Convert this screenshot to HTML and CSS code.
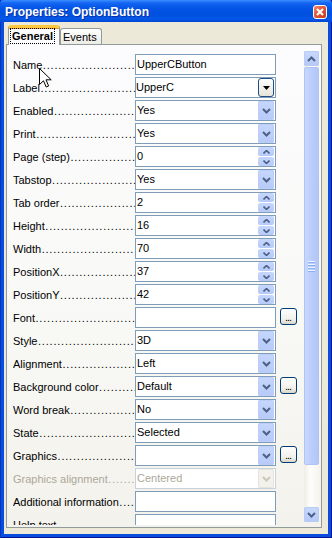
FILE: index.html
```html
<!DOCTYPE html>
<html>
<head>
<meta charset="utf-8">
<link rel="stylesheet" href="styles.css">
</head>
<body>
<div class="window">
  <div class="titlebar">
    <span class="title">Properties: OptionButton</span>
    <span class="close"><svg width="8" height="8" viewBox="0 0 8 8"><path d="M1 1L7 7M7 1L1 7" stroke="#fff" stroke-width="2" fill="none"/></svg></span>
  </div>
  <div class="body">
    <div class="tabs">
      <div class="tab active"><span class="focus">General</span></div>
      <div class="tab">Events</div>
    </div>
    <div class="panel">
      <div class="rows">
        <div class="row"><span class="label">Name</span><div class="field"><span class="val">UpperCButton</span></div></div>
        <div class="row"><span class="label">Label</span><div class="field"><span class="val tight">UpperC</span><span class="dd-dark"><svg width="7" height="4" viewBox="0 0 7 4"><path d="M0 0H7L3.5 4Z" fill="#000"/></svg></span></div></div>
        <div class="row"><span class="label">Enabled</span><div class="field"><span class="val">Yes</span><span class="dd"><svg width="9" height="6" viewBox="0 0 9 6"><path d="M1 1l3.5 3.5L8 1" stroke="#4D6185" stroke-width="2" fill="none"/></svg></span></div></div>
        <div class="row"><span class="label">Print</span><div class="field"><span class="val">Yes</span><span class="dd"><svg width="9" height="6" viewBox="0 0 9 6"><path d="M1 1l3.5 3.5L8 1" stroke="#4D6185" stroke-width="2" fill="none"/></svg></span></div></div>
        <div class="row"><span class="label">Page (step)</span><div class="field"><span class="val">0</span><span class="spin"><span class="sp"><svg width="7" height="4" viewBox="0 0 7 4"><path d="M0.5 3.5l3-3 3 3" stroke="#4D6185" stroke-width="1.6" fill="none"/></svg></span><span class="sp"><svg width="7" height="4" viewBox="0 0 7 4"><path d="M0.5 0.5l3 3 3-3" stroke="#4D6185" stroke-width="1.6" fill="none"/></svg></span></span></div></div>
        <div class="row"><span class="label">Tabstop</span><div class="field"><span class="val">Yes</span><span class="dd"><svg width="9" height="6" viewBox="0 0 9 6"><path d="M1 1l3.5 3.5L8 1" stroke="#4D6185" stroke-width="2" fill="none"/></svg></span></div></div>
        <div class="row"><span class="label">Tab order</span><div class="field"><span class="val">2</span><span class="spin"><span class="sp"><svg width="7" height="4" viewBox="0 0 7 4"><path d="M0.5 3.5l3-3 3 3" stroke="#4D6185" stroke-width="1.6" fill="none"/></svg></span><span class="sp"><svg width="7" height="4" viewBox="0 0 7 4"><path d="M0.5 0.5l3 3 3-3" stroke="#4D6185" stroke-width="1.6" fill="none"/></svg></span></span></div></div>
        <div class="row"><span class="label">Height</span><div class="field"><span class="val">16</span><span class="spin"><span class="sp"><svg width="7" height="4" viewBox="0 0 7 4"><path d="M0.5 3.5l3-3 3 3" stroke="#4D6185" stroke-width="1.6" fill="none"/></svg></span><span class="sp"><svg width="7" height="4" viewBox="0 0 7 4"><path d="M0.5 0.5l3 3 3-3" stroke="#4D6185" stroke-width="1.6" fill="none"/></svg></span></span></div></div>
        <div class="row"><span class="label">Width</span><div class="field"><span class="val">70</span><span class="spin"><span class="sp"><svg width="7" height="4" viewBox="0 0 7 4"><path d="M0.5 3.5l3-3 3 3" stroke="#4D6185" stroke-width="1.6" fill="none"/></svg></span><span class="sp"><svg width="7" height="4" viewBox="0 0 7 4"><path d="M0.5 0.5l3 3 3-3" stroke="#4D6185" stroke-width="1.6" fill="none"/></svg></span></span></div></div>
        <div class="row"><span class="label">PositionX</span><div class="field"><span class="val">37</span><span class="spin"><span class="sp"><svg width="7" height="4" viewBox="0 0 7 4"><path d="M0.5 3.5l3-3 3 3" stroke="#4D6185" stroke-width="1.6" fill="none"/></svg></span><span class="sp"><svg width="7" height="4" viewBox="0 0 7 4"><path d="M0.5 0.5l3 3 3-3" stroke="#4D6185" stroke-width="1.6" fill="none"/></svg></span></span></div></div>
        <div class="row"><span class="label">PositionY</span><div class="field"><span class="val">42</span><span class="spin"><span class="sp"><svg width="7" height="4" viewBox="0 0 7 4"><path d="M0.5 3.5l3-3 3 3" stroke="#4D6185" stroke-width="1.6" fill="none"/></svg></span><span class="sp"><svg width="7" height="4" viewBox="0 0 7 4"><path d="M0.5 0.5l3 3 3-3" stroke="#4D6185" stroke-width="1.6" fill="none"/></svg></span></span></div></div>
        <div class="row"><span class="label">Font</span><div class="field"><span class="val"></span></div><span class="more">...</span></div>
        <div class="row"><span class="label">Style</span><div class="field"><span class="val">3D</span><span class="dd"><svg width="9" height="6" viewBox="0 0 9 6"><path d="M1 1l3.5 3.5L8 1" stroke="#4D6185" stroke-width="2" fill="none"/></svg></span></div></div>
        <div class="row"><span class="label">Alignment</span><div class="field"><span class="val">Left</span><span class="dd"><svg width="9" height="6" viewBox="0 0 9 6"><path d="M1 1l3.5 3.5L8 1" stroke="#4D6185" stroke-width="2" fill="none"/></svg></span></div></div>
        <div class="row"><span class="label">Background color</span><div class="field"><span class="val">Default</span><span class="dd"><svg width="9" height="6" viewBox="0 0 9 6"><path d="M1 1l3.5 3.5L8 1" stroke="#4D6185" stroke-width="2" fill="none"/></svg></span></div><span class="more">...</span></div>
        <div class="row"><span class="label">Word break</span><div class="field"><span class="val">No</span><span class="dd"><svg width="9" height="6" viewBox="0 0 9 6"><path d="M1 1l3.5 3.5L8 1" stroke="#4D6185" stroke-width="2" fill="none"/></svg></span></div></div>
        <div class="row"><span class="label">State</span><div class="field"><span class="val">Selected</span><span class="dd"><svg width="9" height="6" viewBox="0 0 9 6"><path d="M1 1l3.5 3.5L8 1" stroke="#4D6185" stroke-width="2" fill="none"/></svg></span></div></div>
        <div class="row"><span class="label">Graphics</span><div class="field"><span class="val"></span><span class="dd"><svg width="9" height="6" viewBox="0 0 9 6"><path d="M1 1l3.5 3.5L8 1" stroke="#4D6185" stroke-width="2" fill="none"/></svg></span></div><span class="more">...</span></div>
        <div class="row disabled"><span class="label">Graphics alignment</span><div class="field"><span class="val">Centered</span><span class="dd"><svg width="9" height="6" viewBox="0 0 9 6"><path d="M1 1l3.5 3.5L8 1" stroke="#C9C7BA" stroke-width="2" fill="none"/></svg></span></div></div>
        <div class="row"><span class="label">Additional information</span><div class="field"><span class="val"></span></div></div>
        <div class="row"><span class="label">Help text</span><div class="field"><span class="val"></span></div></div>
      </div>
      <div class="scrollbar">
        <div class="sbtn"><svg width="9" height="6" viewBox="0 0 9 6"><path d="M1 5l3.5-3.5L8 5" stroke="#4D6185" stroke-width="2" fill="none"/></svg></div>
        <div class="thumb"><span class="grip"></span><span class="grip"></span><span class="grip"></span><span class="grip"></span></div>
        <div class="track"></div>
        <div class="sbtn"><svg width="9" height="6" viewBox="0 0 9 6"><path d="M1 1l3.5 3.5L8 1" stroke="#4D6185" stroke-width="2" fill="none"/></svg></div>
      </div>
    </div>
  </div>
  <svg class="cursor" width="13" height="20" viewBox="0 0 13 20"><path d="M0.5 0.5V16.5L4.5 12.8L7.2 19L9.6 18L7 11.8H12.2Z" fill="#fff" stroke="#000" stroke-width="1" stroke-linejoin="miter"/></svg>
</div>
</body>
</html>
```

FILE: styles.css
```css
* { box-sizing: border-box; }
html, body { margin: 0; padding: 0; background: #fff; }
body { font-family: "Liberation Sans", Arial, sans-serif; font-size: 11px; color: #000; }

.window {
  position: relative;
  width: 332px;
  height: 538px;
  background: #0A4CE0;
  box-shadow: inset 1px 0 0 #0039B8, inset -1px 0 0 #00138C, inset 0 -1px 0 #00138C;
  display: flex;
  flex-direction: column;
  overflow: hidden;
}

.titlebar {
  flex: none;
  height: 22px;
  display: flex;
  align-items: center;
  justify-content: space-between;
  padding: 1px 5px 0 5px;
  background: linear-gradient(to bottom, #3B8DFF 0px, #1466F2 3px, #0455E6 8px, #0050DE 14px, #0757E8 19px, #0046D2 22px);
  color: #fff;
  font-weight: bold;
  font-size: 12px;
  border-radius: 4px 4px 0 0;
}
.title { text-shadow: 1px 1px 0 rgba(10, 24, 131, 0.6); padding-top: 1px; }
.close {
  width: 14px;
  height: 14px;
  border: 1px solid #fff;
  border-radius: 3px;
  background: linear-gradient(135deg, #F0876A 0%, #E2593A 45%, #C7391A 100%);
  display: flex;
  align-items: center;
  justify-content: center;
  margin-top: 1px;
}

.body {
  flex: 1;
  margin: 0 4px 4px 4px;
  background: #ECE9D8;
  padding: 3px 6px 6px 2px;
  display: flex;
  flex-direction: column;
}

.tabs {
  flex: none;
  height: 19px;
  display: flex;
  align-items: flex-end;
  padding-left: 2px;
}
.tab {
  height: 16px;
  padding: 0 5px 0 2px;
  border: 1px solid #919B9C;
  border-bottom: none;
  border-radius: 3px 3px 0 0;
  background: linear-gradient(to bottom, #FFFFFF, #ECEBE5);
  display: flex;
  align-items: center;
  width: 42px;
}
.tab.active {
  position: relative;
  z-index: 2;
  height: 20px;
  width: 52px;
  margin-bottom: -1px;
  background: #FCFCFE;
  border-top: 3px solid #FFC83C;
  box-shadow: inset 0 1px 0 #E6A01B;
  font-weight: bold;
  padding: 0 0 1px 1px;
  border-color: #FFC83C #919B9C #919B9C #919B9C;
}
.focus {
  border: 1px dotted #000;
  padding: 1px 1px 1px 1px;
  line-height: 12px;
}

.panel {
  flex: none;
  height: 484px;
  border: 1px solid #919B9C;
  background: linear-gradient(to bottom, #FCFCFE 0%, #F8F8F5 60%, #F3F2EC 100%);
  display: flex;
  align-items: flex-start;
}

.rows {
  flex: none;
  width: 297px;
  height: 480px;
  overflow: hidden;
  padding: 9px 0 0 6px;
  display: flex;
  flex-direction: column;
  gap: 2px;
}
.row {
  flex: none;
  height: 21px;
  display: flex;
  align-items: flex-start;
}
.label {
  flex: none;
  width: 122px;
  padding-right: 2px;
  padding-top: 4px;
  line-height: 14px;
  white-space: nowrap;
  overflow: hidden;
}
.label::after { content: "..................................................."; letter-spacing: 0.8px; padding-left: 0.5px; }
.field {
  flex: none;
  width: 141px;
  height: 21px;
  border: 1px solid #7F9DB9;
  background: #fff;
  display: flex;
  align-items: stretch;
}
.val {
  flex: 1;
  padding-left: 1px;
  line-height: 19px;
  white-space: nowrap;
}
.val.tight { padding-left: 0; }
.dd {
  flex: none;
  width: 16px;
  margin: 0 1px 0 0;
  border-radius: 2px;
  background: linear-gradient(to bottom, #C6D7FD, #B6CAF9);
  box-shadow: inset 0 0 0 1px #BBCDF8;
  display: flex;
  align-items: center;
  justify-content: center;
}
.dd-dark {
  flex: none;
  width: 16px;
  margin: 0 1px 0 0;
  border: 1px solid #1F4E83;
  border-radius: 3px;
  background: linear-gradient(to bottom, #FFFFFF, #E6E4D9);
  display: flex;
  align-items: center;
  justify-content: center;
}
.spin {
  flex: none;
  width: 16px;
  margin: 0 1px 0 0;
  display: flex;
  flex-direction: column;
  gap: 1px;
}
.sp {
  flex: 1;
  border-radius: 2px;
  background: linear-gradient(to bottom, #C6D7FD, #B6CAF9);
  display: flex;
  align-items: center;
  justify-content: center;
}
.more {
  flex: none;
  width: 17px;
  height: 17px;
  margin: 1px 0 0 4px;
  border: 1px solid #003C74;
  border-radius: 3px;
  background: linear-gradient(to bottom, #FFFFFF, #F0EFEA 70%, #D8D5C8);
  line-height: 16px;
  text-align: center;
  letter-spacing: -1px;
  padding-right: 1px;
}
.row.disabled .label { color: #ACA899; }
.row.disabled .field { border-color: #C9D2DC; }
.row.disabled .val { color: #ACA899; }
.row.disabled .dd { background: #F2F1EB; box-shadow: inset 0 0 0 1px #E5E3DA; }

.scrollbar {
  flex: none;
  width: 15px;
  height: 471px;
  margin-top: 6px;
  background: linear-gradient(to right, #EEEDE5, #FDFDFB 40%, #F6F5EF);
  display: flex;
  flex-direction: column;
}
.sbtn {
  flex: none;
  height: 15px;
  border-radius: 2px;
  background: linear-gradient(to bottom, #C9D9FE, #B4C8F7);
  box-shadow: inset 0 0 0 1px #B9CCF6;
  display: flex;
  align-items: center;
  justify-content: center;
}
.thumb {
  flex: none;
  height: 398px;
  margin-top: 1px;
  border: 1px solid #AFC4F5;
  border-radius: 2px;
  background: linear-gradient(to right, #C8D8FD, #BACDFB 50%, #B2C6F8);
  display: flex;
  flex-direction: column;
  align-items: center;
  justify-content: center;
  gap: 1px;
}
.grip {
  width: 7px;
  height: 1px;
  background: #EEF4FE;
  box-shadow: 0 1px 0 #8CAEF4;
  margin-bottom: 1px;
}
.track { flex: 1; }

.cursor {
  position: absolute;
  left: 39px;
  top: 68px;
}
```
